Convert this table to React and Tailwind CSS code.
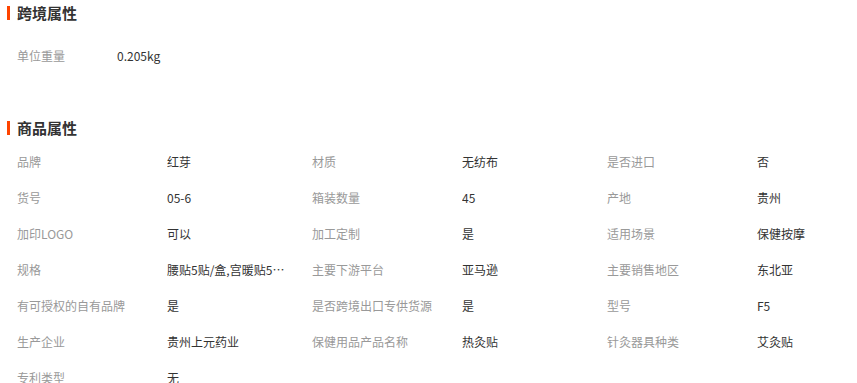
const font = { fontFamily: '"Noto Sans CJK SC", "Liberation Sans", sans-serif' }

const crossBorder = [{ label: '单位重量', value: '0.205kg' }]

const attrs = [
  ['品牌', '红芽'], ['材质', '无纺布'], ['是否进口', '否'],
  ['货号', '05-6'], ['箱装数量', '45'], ['产地', '贵州'],
  ['加印LOGO', '可以'], ['加工定制', '是'], ['适用场景', '保健按摩'],
  ['规格', '腰贴5贴/盒,宫暖贴5贴/盒'], ['主要下游平台', '亚马逊'], ['主要销售地区', '东北亚'],
  ['有可授权的自有品牌', '是'], ['是否跨境出口专供货源', '是'], ['型号', 'F5'],
  ['生产企业', '贵州上元药业'], ['保健用品产品名称', '热灸贴'], ['针灸器具种类', '艾灸贴'],
  ['专利类型', '无'],
]

function SectionTitle({ title, className = '' }) {
  return (
    <div className={`flex items-center gap-[7px] pl-[7px] ${className}`}>
      <span className="w-[3px] h-[14px] bg-[#ff4400]" />
      <h2 className="text-[15px] font-bold text-[#333] leading-5">{title}</h2>
    </div>
  )
}

function Attr({ label, value }) {
  return (
    <div className="flex items-center h-[36px] w-[295px] text-[12px]">
      <span className="w-[150px] shrink-0 text-[#999]">{label}</span>
      <span className="w-[118px] truncate text-[#333]">{value}</span>
    </div>
  )
}

export default function App() {
  return (
    <div style={font} className="w-[857px] h-[383px] overflow-hidden bg-white">
      <SectionTitle title="跨境属性" className="h-[26px]" />
      <div className="pl-[17px] mt-[12px]">
        {crossBorder.map(a => (
          <div key={a.label} className="flex items-center h-[36px] text-[12px]">
            <span className="w-[100px] text-[#999]">{a.label}</span>
            <span className="text-[#333]">{a.value}</span>
          </div>
        ))}
      </div>

      <SectionTitle title="商品属性" className="h-[32px] mt-[38px]" />
      <div className="grid grid-cols-[295px_295px_295px] pl-[17px]">
        {attrs.map(([label, value]) => (
          <Attr key={label} label={label} value={value} />
        ))}
      </div>
    </div>
  )
}
